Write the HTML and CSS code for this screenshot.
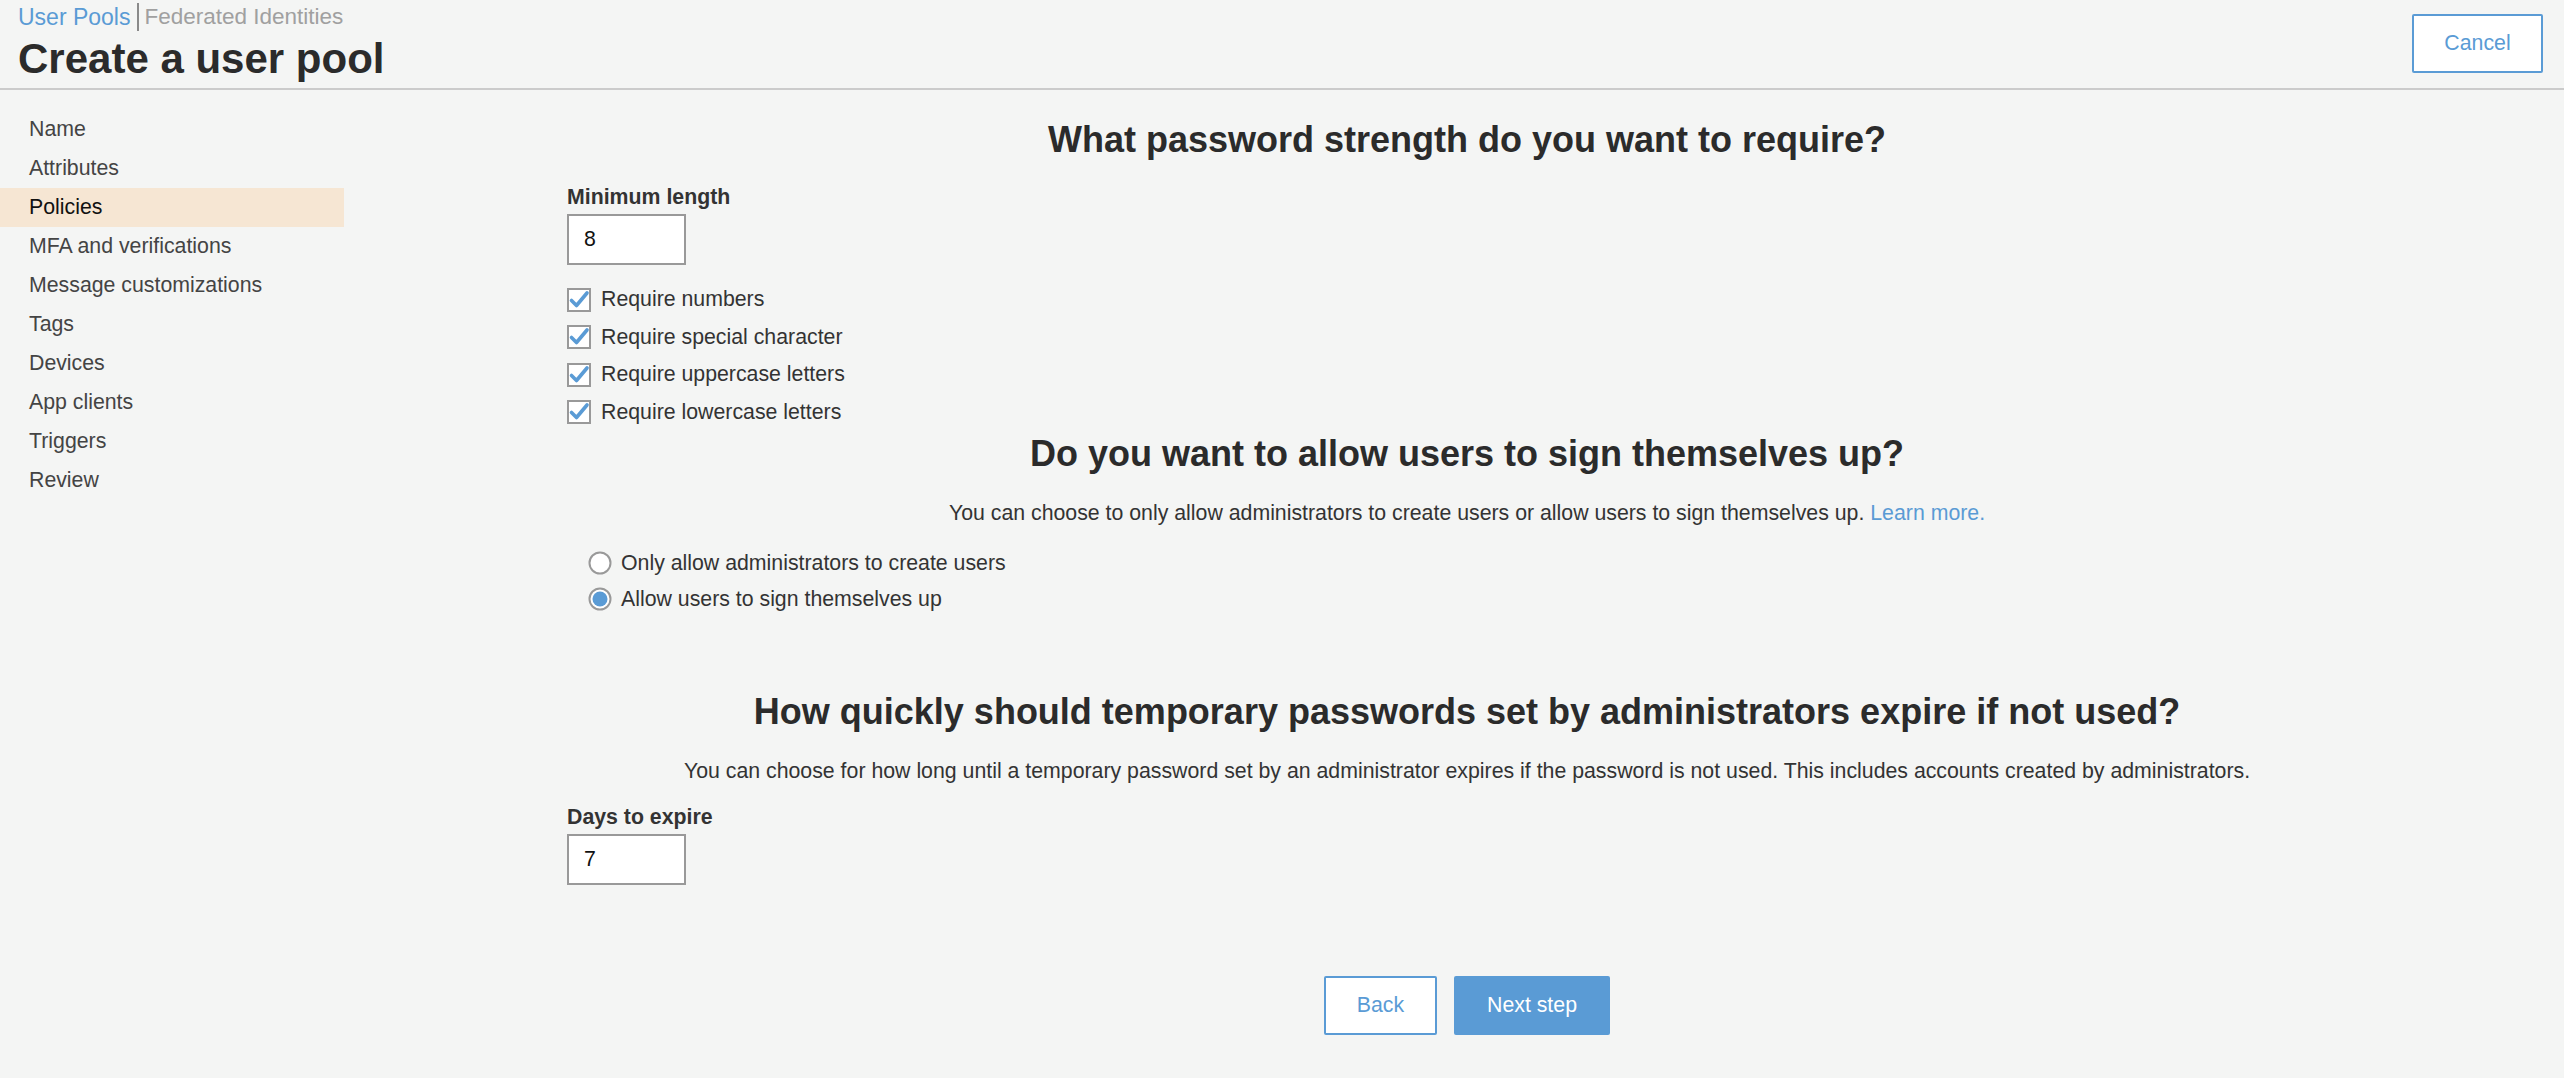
FILE: index.html
```html
<!DOCTYPE html>
<html lang="en">
<head>
<meta charset="utf-8">
<title>Create a user pool</title>
<link rel="stylesheet" href="styles.css">
</head>
<body>
<header class="header">
  <div class="header-left">
    <nav class="tabs">
      <a class="tab tab-active" href="#">User Pools</a>
      <a class="tab tab-inactive" href="#">Federated Identities</a>
    </nav>
    <h1 class="title">Create a user pool</h1>
  </div>
  <button class="btn btn-outline btn-cancel" type="button">Cancel</button>
</header>
<div class="layout">
  <aside class="sidebar">
    <ul class="steps">
      <li class="step">Name</li>
      <li class="step">Attributes</li>
      <li class="step step-current">Policies</li>
      <li class="step">MFA and verifications</li>
      <li class="step">Message customizations</li>
      <li class="step">Tags</li>
      <li class="step">Devices</li>
      <li class="step">App clients</li>
      <li class="step">Triggers</li>
      <li class="step">Review</li>
    </ul>
  </aside>
  <main class="main">
    <div class="content">
      <h2 class="section-title first">What password strength do you want to require?</h2>
      <div class="field-label label-min">Minimum length</div>
      <div class="text-input">8</div>
      <ul class="checks">
        <li class="check-row">
          <svg class="checkbox" width="24" height="24" viewBox="0 0 24 24"><rect x="1" y="1" width="22" height="22" fill="#fff" stroke="#999" stroke-width="2"/><path d="M4.5 12.5 L9.5 17.5 L20 5" fill="none" stroke="#5a9bd5" stroke-width="3.6" stroke-linecap="round" stroke-linejoin="round"/></svg>
          <span>Require numbers</span>
        </li>
        <li class="check-row">
          <svg class="checkbox" width="24" height="24" viewBox="0 0 24 24"><rect x="1" y="1" width="22" height="22" fill="#fff" stroke="#999" stroke-width="2"/><path d="M4.5 12.5 L9.5 17.5 L20 5" fill="none" stroke="#5a9bd5" stroke-width="3.6" stroke-linecap="round" stroke-linejoin="round"/></svg>
          <span>Require special character</span>
        </li>
        <li class="check-row">
          <svg class="checkbox" width="24" height="24" viewBox="0 0 24 24"><rect x="1" y="1" width="22" height="22" fill="#fff" stroke="#999" stroke-width="2"/><path d="M4.5 12.5 L9.5 17.5 L20 5" fill="none" stroke="#5a9bd5" stroke-width="3.6" stroke-linecap="round" stroke-linejoin="round"/></svg>
          <span>Require uppercase letters</span>
        </li>
        <li class="check-row">
          <svg class="checkbox" width="24" height="24" viewBox="0 0 24 24"><rect x="1" y="1" width="22" height="22" fill="#fff" stroke="#999" stroke-width="2"/><path d="M4.5 12.5 L9.5 17.5 L20 5" fill="none" stroke="#5a9bd5" stroke-width="3.6" stroke-linecap="round" stroke-linejoin="round"/></svg>
          <span>Require lowercase letters</span>
        </li>
      </ul>

      <h2 class="section-title second">Do you want to allow users to sign themselves up?</h2>
      <p class="desc desc-signup">You can choose to only allow administrators to create users or allow users to sign themselves up. <a class="link" href="#">Learn more.</a></p>
      <ul class="radios">
        <li class="radio-row">
          <svg class="radio" width="24" height="24" viewBox="0 0 24 24"><circle cx="12" cy="12" r="10.5" fill="#fff" stroke="#999" stroke-width="2"/></svg>
          <span>Only allow administrators to create users</span>
        </li>
        <li class="radio-row">
          <svg class="radio" width="24" height="24" viewBox="0 0 24 24"><circle cx="12" cy="12" r="10.5" fill="#fff" stroke="#999" stroke-width="2"/><circle cx="12" cy="12" r="7.5" fill="#5a9bd5"/></svg>
          <span>Allow users to sign themselves up</span>
        </li>
      </ul>

      <h2 class="section-title third">How quickly should temporary passwords set by administrators expire if not used?</h2>
      <p class="desc desc-expire">You can choose for how long until a temporary password set by an administrator expires if the password is not used. This includes accounts created by administrators.</p>
      <div class="field-label label-days">Days to expire</div>
      <div class="text-input">7</div>

      <div class="actions">
        <button class="btn btn-outline btn-back" type="button">Back</button>
        <button class="btn btn-primary btn-next" type="button">Next step</button>
      </div>
    </div>
  </main>
</div>
</body>
</html>
```

FILE: styles.css
```css
* { box-sizing: border-box; }

html, body {
  margin: 0;
  padding: 0;
  background: #f4f5f4;
}

body {
  font-family: "Liberation Sans", Arial, Helvetica, sans-serif;
  color: #333;
  font-size: 21.3px;
  overflow: hidden;
  height: 1078px;
}

/* Header */
.header {
  display: flex;
  justify-content: space-between;
  align-items: flex-start;
  height: 90px;
  padding: 0 21px 0 18px;
  border-bottom: 2px solid #cbcbcb;
}

.tabs {
  display: flex;
  align-items: center;
  padding-top: 3px;
  height: 31px;
}

.tab {
  font-size: 23px;
  line-height: 28px;
  text-decoration: none;
}

.tab-active {
  color: #5a9bd5;
  padding-right: 7px;
}

.tab-inactive {
  color: #a0a0a0;
  font-weight: 300;
  font-size: 22.5px;
  border-left: 2px solid #8a8a8a;
  padding-left: 5px;
}

.title {
  margin: 6px 0 0;
  font-size: 42px;
  line-height: 44px;
  font-weight: bold;
  color: #2b2b2b;
}

/* Buttons */
.btn {
  font-family: inherit;
  font-size: 21.3px;
  border-radius: 2px;
  cursor: pointer;
}

.btn-outline {
  background: #fff;
  color: #5a9bd5;
  border: 2px solid #5a9bd5;
}

.btn-primary {
  background: #5a9bd5;
  color: #fff;
  border: 2px solid #5a9bd5;
}

.btn-cancel {
  margin-top: 14px;
  width: 131px;
  height: 59px;
}

/* Layout */
.layout {
  display: flex;
}

.sidebar {
  width: 344px;
  flex: none;
  padding-top: 20px;
}

.steps {
  list-style: none;
  margin: 0;
  padding: 0;
}

.step {
  height: 39px;
  line-height: 39px;
  padding-left: 29px;
  color: #444;
  font-size: 21.3px;
}

.step-current {
  background: #f6e6d3;
  color: #111;
}

.main {
  flex: 1;
  padding-left: 223px;
}

.content {
  width: 1800px;
}

.section-title {
  margin: 0;
  text-align: center;
  font-size: 36px;
  line-height: 42px;
  font-weight: bold;
  color: #2b2b2b;
}

.section-title.first { margin-top: 29px; }
.section-title.second { margin-top: 2px; }
.section-title.third { margin-top: 74px; }

.field-label {
  font-weight: bold;
  font-size: 21.3px;
  line-height: 24px;
  color: #333;
}

.label-min { margin-top: 24px; }
.label-days { margin-top: 22px; }

.text-input {
  margin-top: 5px;
  width: 119px;
  height: 51px;
  background: #fff;
  border: 2px solid #999;
  padding-left: 15px;
  line-height: 47px;
  font-size: 21.3px;
  color: #111;
}

.checks, .radios {
  list-style: none;
  margin: 0;
  padding: 0;
}

.checks { margin-top: 16px; }

.check-row {
  display: flex;
  align-items: center;
  gap: 10px;
  height: 37.5px;
  color: #333;
}

.checkbox { flex: none; }

.desc {
  margin: 26px 0 0;
  text-align: center;
  line-height: 24px;
  color: #333;
}

.link {
  color: #5a9bd5;
  text-decoration: none;
}

.radios {
  margin-top: 20px;
  padding-left: 21px;
}

.radio-row {
  display: flex;
  align-items: center;
  gap: 9px;
  height: 36px;
  color: #333;
}

.radio { flex: none; }

.actions {
  margin-top: 91px;
  display: flex;
  justify-content: center;
  gap: 17px;
}

.btn-back {
  width: 113px;
  height: 59px;
}

.btn-next {
  width: 156px;
  height: 59px;
}
```
